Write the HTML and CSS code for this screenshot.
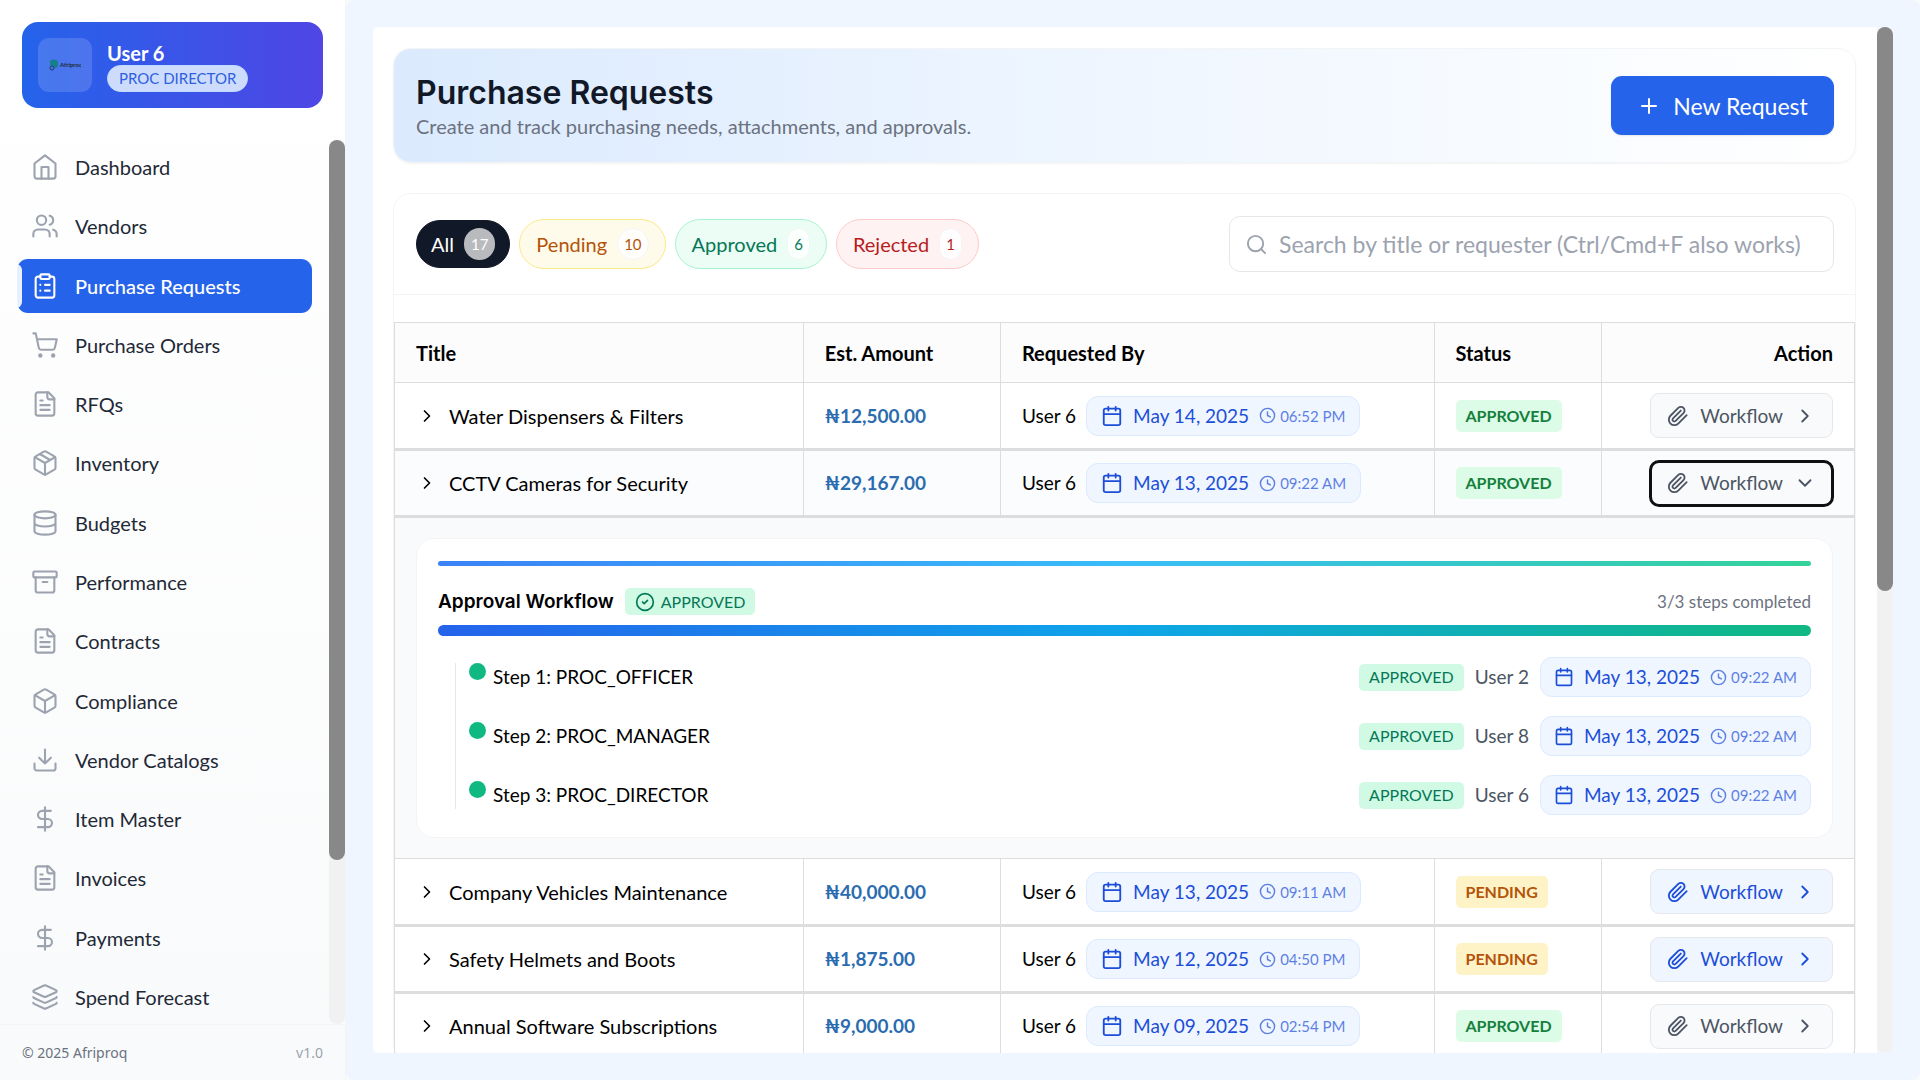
FILE: index.html
```html
<!DOCTYPE html>
<html lang="en">

<head>
    <meta charset="UTF-8">
    <meta name="viewport" content="width=device-width, initial-scale=1.0">
    <title>Purchase Requests - Afriproq</title>
    <link rel="stylesheet" href="styles.css">
</head>

<body>
    <!-- Icon set -->
    <svg class="sprite" aria-hidden="true">
        <symbol id="home" viewBox="0 0 24 24"><path d="m3 9 9-7 9 7v11a2 2 0 0 1-2 2H5a2 2 0 0 1-2-2z"/><path d="M9 22V12h6v10"/></symbol>
        <symbol id="users" viewBox="0 0 24 24"><path d="M16 21v-2a4 4 0 0 0-4-4H6a4 4 0 0 0-4 4v2"/><circle cx="9" cy="7" r="4"/><path d="M22 21v-2a4 4 0 0 0-3-3.87"/><path d="M16 3.13a4 4 0 0 1 0 7.75"/></symbol>
        <symbol id="clipboard" viewBox="0 0 24 24"><rect x="8" y="2" width="8" height="4" rx="1"/><path d="M16 4h2a2 2 0 0 1 2 2v14a2 2 0 0 1-2 2H6a2 2 0 0 1-2-2V6a2 2 0 0 1 2-2h2"/><path d="M12 11h4M12 16h4M8 11h.01M8 16h.01"/></symbol>
        <symbol id="cart" viewBox="0 0 24 24"><circle cx="8" cy="21" r="1"/><circle cx="19" cy="21" r="1"/><path d="M2.05 2.05h2l2.66 12.42a2 2 0 0 0 2 1.58h9.78a2 2 0 0 0 1.95-1.57l1.65-7.43H5.12"/></symbol>
        <symbol id="file" viewBox="0 0 24 24"><path d="M15 2H6a2 2 0 0 0-2 2v16a2 2 0 0 0 2 2h12a2 2 0 0 0 2-2V7z"/><path d="M14 2v4a2 2 0 0 0 2 2h4M10 9H8M16 13H8M16 17H8"/></symbol>
        <symbol id="package" viewBox="0 0 24 24"><path d="m7.5 4.27 9 5.15"/><path d="M21 8a2 2 0 0 0-1-1.73l-7-4a2 2 0 0 0-2 0l-7 4A2 2 0 0 0 3 8v8a2 2 0 0 0 1 1.73l7 4a2 2 0 0 0 2 0l7-4A2 2 0 0 0 21 16Z"/><path d="m3.3 7 8.7 5 8.7-5M12 22V12"/></symbol>
        <symbol id="database" viewBox="0 0 24 24"><ellipse cx="12" cy="5" rx="9" ry="3"/><path d="M3 5v14a9 3 0 0 0 18 0V5M3 12a9 3 0 0 0 18 0"/></symbol>
        <symbol id="archive" viewBox="0 0 24 24"><rect x="2" y="3" width="20" height="5" rx="1"/><path d="M4 8v11a2 2 0 0 0 2 2h12a2 2 0 0 0 2-2V8M10 12h4"/></symbol>
        <symbol id="box" viewBox="0 0 24 24"><path d="M21 8a2 2 0 0 0-1-1.73l-7-4a2 2 0 0 0-2 0l-7 4A2 2 0 0 0 3 8v8a2 2 0 0 0 1 1.73l7 4a2 2 0 0 0 2 0l7-4A2 2 0 0 0 21 16Z"/><path d="m3.3 7 8.7 5 8.7-5M12 22V12"/></symbol>
        <symbol id="download" viewBox="0 0 24 24"><path d="M21 15v4a2 2 0 0 1-2 2H5a2 2 0 0 1-2-2v-4M7 10l5 5 5-5M12 15V3"/></symbol>
        <symbol id="dollar" viewBox="0 0 24 24"><path d="M12 2v20M17 5H9.500a3.500 3.500 0 0 0 0 7h5a3.500 3.500 0 0 1 0 7H6"/></symbol>
        <symbol id="layers" viewBox="0 0 24 24"><path d="m12.830 2.180a2 2 0 0 0-1.660 0L2.600 6.080a1 1 0 0 0 0 1.830l8.580 3.910a2 2 0 0 0 1.660 0l8.580-3.900a1 1 0 0 0 0-1.830z"/><path d="M2 12a1 1 0 0 0 .58.91l8.600 3.910a2 2 0 0 0 1.650 0l8.580-3.900A1 1 0 0 0 22 12M2 17a1 1 0 0 0 .58.91l8.600 3.910a2 2 0 0 0 1.650 0l8.580-3.900A1 1 0 0 0 22 17"/></symbol>
        <symbol id="plus" viewBox="0 0 24 24"><path d="M5 12h14M12 5v14"/></symbol>
        <symbol id="search" viewBox="0 0 24 24"><circle cx="11" cy="11" r="8"/><path d="m21 21-4.300-4.300"/></symbol>
        <symbol id="calendar" viewBox="0 0 24 24"><path d="M8 2v4M16 2v4M3 10h18"/><rect x="3" y="4" width="18" height="18" rx="2"/></symbol>
        <symbol id="clock" viewBox="0 0 24 24"><circle cx="12" cy="12" r="10"/><path d="M12 7v5l4 2"/></symbol>
        <symbol id="check" viewBox="0 0 24 24"><circle cx="12" cy="12" r="10"/><path d="m9 12 2 2 4-4"/></symbol>
        <symbol id="right" viewBox="0 0 24 24"><path d="m9 18 6-6-6-6"/></symbol>
        <symbol id="down" viewBox="0 0 24 24"><path d="m6 9 6 6 6-6"/></symbol>
        <symbol id="clip" viewBox="0 0 24 24"><path d="m21.440 11.050-9.190 9.190a6 6 0 0 1-8.490-8.490l8.570-8.570A4 4 0 1 1 18 8.840l-8.590 8.570a2 2 0 0 1-2.830-2.830l8.490-8.480"/></symbol>
    </svg>

    <aside class="sidebar">
        <div class="user-card">
            <div class="logo">
                <svg viewBox="0 0 32 12" width="32" height="12" role="img" aria-label="Afriproq">
                    <path d="M1 2C3 0 8 0 9 3c1 2-1 3 0 5l-3 1-2-2-3-1z" fill="#15808c"/>
                    <circle cx="3" cy="9" r="2" fill="none" stroke="#1e3a5f"/>
                    <text x="11" y="8" class="logo-text">Afriproq</text>
                </svg>
            </div>
            <div class="user-info">
                <strong>User 6</strong>
                <span class="role">PROC DIRECTOR</span>
            </div>
        </div>

        <div class="nav-wrap">
            <nav class="nav">
                <a href="#"><svg class="icon"><use href="#home"/></svg>Dashboard</a>
                <a href="#"><svg class="icon"><use href="#users"/></svg>Vendors</a>
                <a href="#" class="active"><svg class="icon"><use href="#clipboard"/></svg>Purchase Requests</a>
                <a href="#"><svg class="icon"><use href="#cart"/></svg>Purchase Orders</a>
                <a href="#"><svg class="icon"><use href="#file"/></svg>RFQs</a>
                <a href="#"><svg class="icon"><use href="#package"/></svg>Inventory</a>
                <a href="#"><svg class="icon"><use href="#database"/></svg>Budgets</a>
                <a href="#"><svg class="icon"><use href="#archive"/></svg>Performance</a>
                <a href="#"><svg class="icon"><use href="#file"/></svg>Contracts</a>
                <a href="#"><svg class="icon"><use href="#box"/></svg>Compliance</a>
                <a href="#"><svg class="icon"><use href="#download"/></svg>Vendor Catalogs</a>
                <a href="#"><svg class="icon"><use href="#dollar"/></svg>Item Master</a>
                <a href="#"><svg class="icon"><use href="#file"/></svg>Invoices</a>
                <a href="#"><svg class="icon"><use href="#dollar"/></svg>Payments</a>
                <a href="#"><svg class="icon"><use href="#layers"/></svg>Spend Forecast</a>
            </nav>
            <div class="scrollbar"><div class="thumb thumb-nav"></div></div>
        </div>

        <footer class="side-footer">
            <span>© 2025 Afriproq</span>
            <span class="version">v1.0</span>
        </footer>
    </aside>

    <main class="main">
        <div class="panel">
            <header class="page-header">
                <div>
                    <h1>Purchase Requests</h1>
                    <p>Create and track purchasing needs, attachments, and approvals.</p>
                </div>
                <button class="btn-new"><svg class="icon"><use href="#plus"/></svg>New Request</button>
            </header>

            <section class="list-card">
                <div class="toolbar">
                    <div class="filters">
                        <button class="filter all">All <span>17</span></button>
                        <button class="filter pending">Pending <span>10</span></button>
                        <button class="filter approved">Approved <span>6</span></button>
                        <button class="filter rejected">Rejected <span>1</span></button>
                    </div>
                    <label class="search">
                        <svg class="icon"><use href="#search"/></svg>
                        <input type="text" aria-label="Search requests" placeholder="Search by title or requester (Ctrl/Cmd+F also works)">
                    </label>
                </div>

                <table class="requests">
                    <thead>
                        <tr>
                            <th class="col-title">Title</th>
                            <th class="col-amount">Est. Amount</th>
                            <th class="col-by">Requested By</th>
                            <th class="col-status">Status</th>
                            <th class="col-action">Action</th>
                        </tr>
                    </thead>
                    <tbody>
                        <tr>
                            <td><div class="title"><svg class="icon"><use href="#right"/></svg>Water Dispensers &amp; Filters</div></td>
                            <td class="amount">₦12,500.00</td>
                            <td><div class="by">User 6
                                <span class="date"><svg class="icon"><use href="#calendar"/></svg>May 14, 2025<small><svg class="icon"><use href="#clock"/></svg>06:52 PM</small></span></div></td>
                            <td><span class="status ok">APPROVED</span></td>
                            <td class="action"><button class="workflow"><svg class="icon"><use href="#clip"/></svg>Workflow<svg class="icon"><use href="#right"/></svg></button></td>
                        </tr>
                        <tr class="open">
                            <td><div class="title"><svg class="icon"><use href="#right"/></svg>CCTV Cameras for Security</div></td>
                            <td class="amount">₦29,167.00</td>
                            <td><div class="by">User 6
                                <span class="date"><svg class="icon"><use href="#calendar"/></svg>May 13, 2025<small><svg class="icon"><use href="#clock"/></svg>09:22 AM</small></span></div></td>
                            <td><span class="status ok">APPROVED</span></td>
                            <td class="action"><button class="workflow focused"><svg class="icon"><use href="#clip"/></svg>Workflow<svg class="icon"><use href="#down"/></svg></button></td>
                        </tr>
                        <tr class="details">
                            <td colspan="5">
                                <div class="flow-card">
                                    <div class="flow-accent"></div>
                                    <div class="flow-head">
                                        <h2>Approval Workflow</h2>
                                        <span class="tag"><svg class="icon"><use href="#check"/></svg>APPROVED</span>
                                        <span class="flow-count">3/3 steps completed</span>
                                    </div>
                                    <div class="flow-progress"></div>
                                    <ol class="steps">
                                        <li>
                                            <i class="dot"></i>
                                            <span class="step-name">Step 1: PROC_OFFICER</span>
                                            <span class="tag">APPROVED</span>
                                            <span class="step-user">User 2</span>
                                            <span class="date"><svg class="icon"><use href="#calendar"/></svg>May 13, 2025<small><svg class="icon"><use href="#clock"/></svg>09:22 AM</small></span>
                                        </li>
                                        <li>
                                            <i class="dot"></i>
                                            <span class="step-name">Step 2: PROC_MANAGER</span>
                                            <span class="tag">APPROVED</span>
                                            <span class="step-user">User 8</span>
                                            <span class="date"><svg class="icon"><use href="#calendar"/></svg>May 13, 2025<small><svg class="icon"><use href="#clock"/></svg>09:22 AM</small></span>
                                        </li>
                                        <li>
                                            <i class="dot"></i>
                                            <span class="step-name">Step 3: PROC_DIRECTOR</span>
                                            <span class="tag">APPROVED</span>
                                            <span class="step-user">User 6</span>
                                            <span class="date"><svg class="icon"><use href="#calendar"/></svg>May 13, 2025<small><svg class="icon"><use href="#clock"/></svg>09:22 AM</small></span>
                                        </li>
                                    </ol>
                                </div>
                            </td>
                        </tr>
                        <tr>
                            <td><div class="title"><svg class="icon"><use href="#right"/></svg>Company Vehicles Maintenance</div></td>
                            <td class="amount">₦40,000.00</td>
                            <td><div class="by">User 6
                                <span class="date"><svg class="icon"><use href="#calendar"/></svg>May 13, 2025<small><svg class="icon"><use href="#clock"/></svg>09:11 AM</small></span></div></td>
                            <td><span class="status wait">PENDING</span></td>
                            <td class="action"><button class="workflow todo"><svg class="icon"><use href="#clip"/></svg>Workflow<svg class="icon"><use href="#right"/></svg></button></td>
                        </tr>
                        <tr>
                            <td><div class="title"><svg class="icon"><use href="#right"/></svg>Safety Helmets and Boots</div></td>
                            <td class="amount">₦1,875.00</td>
                            <td><div class="by">User 6
                                <span class="date"><svg class="icon"><use href="#calendar"/></svg>May 12, 2025<small><svg class="icon"><use href="#clock"/></svg>04:50 PM</small></span></div></td>
                            <td><span class="status wait">PENDING</span></td>
                            <td class="action"><button class="workflow todo"><svg class="icon"><use href="#clip"/></svg>Workflow<svg class="icon"><use href="#right"/></svg></button></td>
                        </tr>
                        <tr>
                            <td><div class="title"><svg class="icon"><use href="#right"/></svg>Annual Software Subscriptions</div></td>
                            <td class="amount">₦9,000.00</td>
                            <td><div class="by">User 6
                                <span class="date"><svg class="icon"><use href="#calendar"/></svg>May 09, 2025<small><svg class="icon"><use href="#clock"/></svg>02:54 PM</small></span></div></td>
                            <td><span class="status ok">APPROVED</span></td>
                            <td class="action"><button class="workflow"><svg class="icon"><use href="#clip"/></svg>Workflow<svg class="icon"><use href="#right"/></svg></button></td>
                        </tr>
                    </tbody>
                </table>
            </section>
        </div>
        <div class="scrollbar"><div class="thumb thumb-main"></div></div>
    </main>
</body>

</html>
```
FILE: styles.css
```css
* {
    box-sizing: border-box;
}

body {
    display: flex;
    height: 100vh;
    margin: 0;
    overflow: hidden;
    font-family: Lato, "Noto Sans", sans-serif;
    font-size: 20px;
    line-height: 26px;
    color: #000;
    background: #f9fafb;
}

button,
input {
    font: inherit;
}

button {
    cursor: pointer;
}

.sprite {
    position: absolute;
    width: 0;
    height: 0;
}

.icon {
    flex: none;
    width: 20px;
    height: 20px;
    fill: none;
    stroke: currentColor;
    stroke-width: 2;
    stroke-linecap: round;
    stroke-linejoin: round;
}

/* Sidebar */
.sidebar {
    display: flex;
    flex: none;
    flex-direction: column;
    width: 346px;
    border-right: 1px solid #f3f4f6;
    background: linear-gradient(#fff, #f9fafb);
}

.user-card {
    display: flex;
    align-items: center;
    gap: 15px;
    height: 86px;
    margin: 22px 22px 32px;
    padding: 0 16px;
    border-radius: 16px;
    color: #fff;
    background: linear-gradient(to right, #2563eb, #4f46e5);
}

.logo {
    display: flex;
    align-items: center;
    justify-content: center;
    width: 54px;
    height: 54px;
    border-radius: 11px;
    background: rgba(255, 255, 255, 0.15);
}

.logo-text {
    font-size: 6px;
    font-weight: 700;
    fill: #1f2937;
}

.user-info {
    display: flex;
    flex-direction: column;
    align-items: flex-start;
    padding-top: 3px;
}

.user-info strong {
    font-size: 20px;
    line-height: 23px;
}

.role {
    padding: 0 11px;
    border: 1px solid #bfdbfe;
    border-radius: 14px;
    font-size: 15px;
    line-height: 25px;
    color: #2f5fe0;
    background: #cddcfd;
}

.nav-wrap {
    display: flex;
    flex: 1;
    min-height: 0;
}

.nav {
    display: flex;
    flex: 1;
    flex-direction: column;
    justify-content: space-between;
    padding: 0 17px;
}

.nav a {
    display: flex;
    align-items: center;
    gap: 16px;
    height: 54px;
    padding-left: 14px;
    border-radius: 11px;
    color: #1f2937;
    text-decoration: none;
}

.nav .icon {
    width: 28px;
    height: 28px;
    stroke-width: 1.8;
    color: #9ca3af;
}

.nav .active {
    position: relative;
    color: #fff;
    font-weight: 500;
    background: #2563eb;
}

.nav .active .icon {
    color: #fff;
}

.nav .active::before {
    content: "";
    position: absolute;
    left: -1px;
    top: 5px;
    bottom: 5px;
    width: 6px;
    border-radius: 0 6px 6px 0;
    background: rgba(255, 255, 255, 0.9);
}

.scrollbar {
    flex: none;
    width: 16px;
    border-radius: 8px;
    background: #f1f1f1;
}

.thumb {
    border-radius: 8px;
    background: #888;
}

.thumb-nav {
    height: 81.5%;
}

.thumb-main {
    height: 55%;
}

.side-footer {
    display: flex;
    align-items: center;
    justify-content: space-between;
    height: 56px;
    padding: 0 22px;
    border-top: 1px solid #f3f4f6;
    font-family: "Noto Sans", sans-serif;
    font-size: 14px;
    color: #6b7280;
}

.version {
    color: #9ca3af;
}

/* Main area */
.main {
    display: flex;
    flex: 1;
    min-width: 0;
    padding: 27px;
    border-radius: 8px;
    background: #eff6ff;
}

.panel {
    flex: 1;
    min-width: 0;
    padding: 21px 21px 0 20px;
    overflow: hidden;
    border-radius: 5px 0 0 5px;
    background: #fff;
}

.page-header {
    display: flex;
    align-items: center;
    justify-content: space-between;
    height: 115px;
    margin-bottom: 30px;
    padding: 0 21px 0 22px;
    border: 1px solid #f3f4f6;
    border-radius: 18px;
    background: linear-gradient(to right, #dbeafe, #eff6ff 50%, #fff);
    box-shadow: 0 1px 2px rgba(0, 0, 0, 0.05);
}

.page-header h1 {
    margin: 0;
    font-family: Inter, sans-serif;
    font-size: 32px;
    font-weight: 600;
    line-height: 40px;
    color: #111827;
}

.page-header p {
    margin: 0;
    color: #6b7280;
}

.btn-new {
    display: flex;
    align-items: center;
    justify-content: center;
    gap: 12px;
    width: 223px;
    height: 59px;
    border: 0;
    border-radius: 11px;
    font-size: 23px;
    color: #fff;
    background: #2563eb;
    box-shadow: 0 1px 2px rgba(0, 0, 0, 0.1);
}

.btn-new .icon {
    width: 24px;
    height: 24px;
}

.list-card {
    border: 1px solid #f3f4f6;
    border-radius: 18px;
}

.toolbar {
    display: flex;
    align-items: center;
    justify-content: space-between;
    height: 101px;
    margin-bottom: 27px;
    padding: 0 21px 0 22px;
    border-bottom: 1px solid #f3f4f6;
}

.filters {
    display: flex;
    align-items: center;
    gap: 9px;
}

.filter {
    display: flex;
    align-items: center;
    gap: 10px;
    height: 50px;
    padding: 0 16px;
    border: 1px solid;
    border-radius: 25px;
}

.filter span {
    padding: 0 6px;
    border: 1px solid #f3f4f6;
    border-radius: 16px;
    font-size: 15px;
    line-height: 30px;
    background: rgba(255, 255, 255, 0.8);
}

.all {
    height: 48px;
    padding: 0 14px;
    border-color: #111827;
    color: #fff;
    background: #111827;
}

.all span {
    border-color: transparent;
    background: rgba(255, 255, 255, 0.7);
}

.pending {
    border-color: #fde68a;
    color: #b45309;
    background: #fffbeb;
}

.approved {
    border-color: #a7f3d0;
    color: #047857;
    background: #ecfdf5;
}

.rejected {
    border-color: #fecaca;
    color: #b91c1c;
    background: #fef2f2;
}

.search {
    display: flex;
    align-items: center;
    gap: 11px;
    width: 605px;
    height: 56px;
    padding: 0 15px;
    border: 1px solid #e5e7eb;
    border-radius: 11px;
    color: #9ca3af;
}

.search .icon {
    width: 23px;
    height: 23px;
}

.search input {
    flex: 1;
    min-width: 0;
    padding: 0;
    border: 0;
    outline: 0;
    font-size: 23px;
    background: none;
}

.search input::placeholder {
    color: #9ca3af;
}

/* Requests table */
.requests {
    width: 100%;
    table-layout: fixed;
    border-collapse: collapse;
}

.requests th,
.requests td {
    padding: 0 21px;
    border: 1px solid #ddd;
    text-align: left;
}

.requests th {
    height: 60px;
    font-weight: 700;
    background: #fcfcfd;
}

.requests td {
    height: 67px;
    border-bottom-width: 3px;
}

.requests .col-title {
    width: 28%;
}

.col-amount {
    width: 13.5%;
}

.col-by {
    width: 29.7%;
}

.col-status {
    width: 11.5%;
}

.requests .col-action,
.requests .action {
    text-align: right;
}

.requests .open {
    background: #fbfcfe;
}

.title {
    display: flex;
    align-items: center;
    gap: 12px;
    padding-left: 1px;
}

.requests .amount {
    font-size: 19px;
    font-weight: 700;
    color: #2b6cb0;
}

.by {
    display: flex;
    align-items: center;
    gap: 10px;
    font-size: 19px;
}

.date {
    display: flex;
    align-items: center;
    height: 40px;
    padding: 0 14px;
    gap: 10px;
    border: 1px solid #dbeafe;
    border-radius: 12px;
    font-size: 19px;
    white-space: nowrap;
    color: #1d4ed8;
    background: #eff6ff;
}

.date .icon {
    width: 22px;
    height: 22px;
}

.date small {
    display: flex;
    align-items: center;
    gap: 4px;
    font-size: 15px;
    opacity: 0.7;
}

.date small .icon {
    width: 17px;
    height: 17px;
}

.status {
    display: inline-block;
    padding: 0 10px;
    border-radius: 5px;
    font-size: 16px;
    font-weight: 700;
    line-height: 32px;
}

.ok {
    color: #15803d;
    background: #dcfce7;
}

.wait {
    color: #b45309;
    background: #fef3c7;
}

.workflow {
    display: inline-flex;
    align-items: center;
    gap: 11px;
    height: 45px;
    padding: 0 16px;
    border: 1px solid #e5e7eb;
    border-radius: 9px;
    font-size: 19px;
    color: #4b5563;
    background: #f9fafb;
    vertical-align: middle;
}

.workflow .icon {
    width: 22px;
    height: 22px;
}

.focused {
    outline: 3px solid #101010;
    outline-offset: -2px;
}

.todo {
    color: #1d4ed8;
    background: #eff6ff;
}

/* Expanded approval workflow */
.requests .details td {
    padding: 20px 21px;
    border-bottom-width: 1px;
    background: #f9fafb;
}

.flow-card {
    padding: 22px 21px;
    border: 1px solid #f3f4f6;
    border-radius: 18px;
    background: #fff;
}

.flow-accent {
    height: 5px;
    border-radius: 3px;
    background: linear-gradient(to right, #3b82f6, #38bdf8, #34d399);
}

.flow-head {
    display: flex;
    align-items: center;
    gap: 11px;
    height: 27px;
    margin: 22px 0 10px;
}

.flow-head h2 {
    margin: 0;
    font-family: Inter, sans-serif;
    font-size: 19px;
    font-weight: 600;
}

.tag {
    display: inline-flex;
    align-items: center;
    gap: 6px;
    height: 27px;
    padding: 0 10px;
    border-radius: 5px;
    font-size: 16px;
    color: #047857;
    background: #d1fae5;
}

.flow-count {
    margin-left: auto;
    font-size: 17px;
    color: #6b7280;
}

.flow-progress {
    height: 11px;
    border-radius: 6px;
    background: linear-gradient(to right, #2563eb, #0ea5e9, #10b981);
}

.steps {
    display: flex;
    flex-direction: column;
    gap: 19px;
    margin: 21px 0 0;
    padding: 0;
    list-style: none;
    background: linear-gradient(#e5e7eb, #e5e7eb) 17px 6px / 1px 146px no-repeat;
}

.steps li {
    display: flex;
    align-items: center;
    gap: 11px;
    height: 40px;
}

.steps .date {
    padding: 0 13px;
}

.steps .date > .icon {
    width: 20px;
    height: 20px;
}

.dot {
    align-self: flex-start;
    width: 17px;
    height: 17px;
    margin: 6px -4px 0 31px;
    border-radius: 50%;
    background: #10b981;
}

.step-name {
    flex: 1;
    font-size: 19px;
}

.step-user {
    font-size: 19px;
    color: #4b5563;
}
```
